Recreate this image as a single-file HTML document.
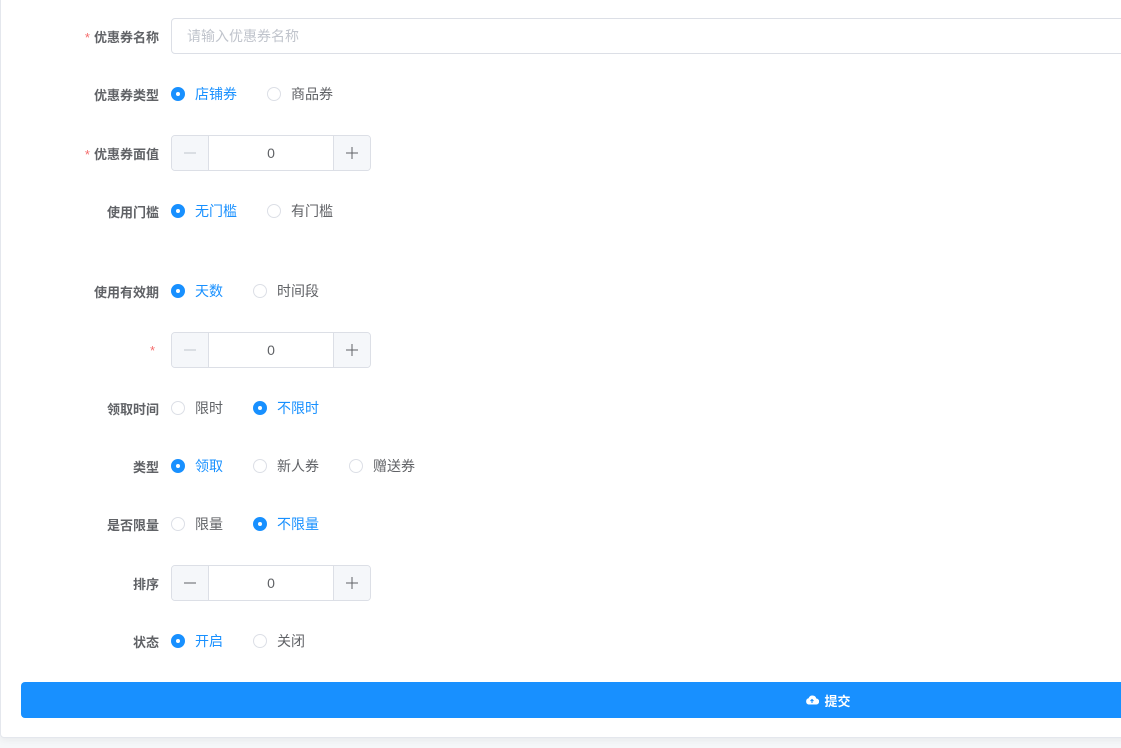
<!DOCTYPE html>
<html><head><meta charset="utf-8"><style>
*{box-sizing:border-box;margin:0;padding:0}
body{width:1121px;height:748px;background:#f5f7f9;font-family:"Liberation Sans","Noto Sans CJK SC",sans-serif;font-size:14px;color:#606266;overflow:hidden;position:relative}
.card{position:absolute;left:0;top:-10px;width:1140px;height:748px;background:#fff;border:1px solid #e4e7ed;border-radius:4px;box-shadow:0 2px 8px rgba(0,0,0,.06)}
.row{position:absolute;left:0;height:36px;display:flex;align-items:center}
.lab{width:159px;text-align:right;font-weight:bold;color:#606266;font-size:13px;margin-right:12px}
.req{color:#f56c6c;font-weight:normal;margin-right:4px}
.inp{width:960px;height:36px;border:1px solid #dcdfe6;border-radius:4px;padding-left:15px;line-height:34px;color:#c0c4cc;font-size:14px}
.r{display:flex;align-items:center;margin-right:30px}
.c{width:14px;height:14px;border:1px solid #dcdfe6;border-radius:50%;margin-right:10px;background:#fff;position:relative}
.on .c{background:#1890ff;border-color:#1890ff}
.on .c:after{content:"";position:absolute;left:4px;top:4px;width:4px;height:4px;border-radius:50%;background:#fff}
.on{color:#1890ff}
.num{width:200px;height:36px;border:1px solid #dcdfe6;border-radius:4px;display:flex;overflow:hidden}
.num .b{width:36px;background:#f5f7fa;display:flex;align-items:center;justify-content:center}
.num .m{flex:1;border-left:1px solid #dcdfe6;border-right:1px solid #dcdfe6;text-align:center;line-height:34px;font-size:14px}
.btn{position:absolute;left:21px;top:682px;width:1614px;height:36px;background:#1890ff;border-radius:4px;color:#fff;font-weight:bold;font-size:13px;display:flex;align-items:center;justify-content:center}
</style></head><body>
<div class="card"></div>
<div class="row" style="top:18px"><div class="lab"><span class="req">*</span>优惠券名称</div><div class="inp">请输入优惠券名称</div></div>
<div class="row" style="top:76px"><div class="lab">优惠券类型</div><div class="r on"><span class="c"></span>店铺券</div><div class="r"><span class="c"></span>商品券</div></div>
<div class="row" style="top:135px"><div class="lab"><span class="req">*</span>优惠券面值</div><div class="num"><div class="b"><svg width="14" height="14"><path d="M1 7h12" stroke="#c0c4cc" stroke-width="1"/></svg></div><div class="m">0</div><div class="b"><svg width="14" height="14"><path d="M1 7h12M7 1v12" stroke="#606266" stroke-width="1"/></svg></div></div></div>
<div class="row" style="top:193px"><div class="lab">使用门槛</div><div class="r on"><span class="c"></span>无门槛</div><div class="r"><span class="c"></span>有门槛</div></div>
<div class="row" style="top:273px"><div class="lab">使用有效期</div><div class="r on"><span class="c"></span>天数</div><div class="r"><span class="c"></span>时间段</div></div>
<div class="row" style="top:332px"><div class="lab"><span class="req">*</span></div><div class="num"><div class="b"><svg width="14" height="14"><path d="M1 7h12" stroke="#c0c4cc" stroke-width="1"/></svg></div><div class="m">0</div><div class="b"><svg width="14" height="14"><path d="M1 7h12M7 1v12" stroke="#606266" stroke-width="1"/></svg></div></div></div>
<div class="row" style="top:390px"><div class="lab">领取时间</div><div class="r"><span class="c"></span>限时</div><div class="r on"><span class="c"></span>不限时</div></div>
<div class="row" style="top:448px"><div class="lab">类型</div><div class="r on"><span class="c"></span>领取</div><div class="r"><span class="c"></span>新人券</div><div class="r"><span class="c"></span>赠送券</div></div>
<div class="row" style="top:506px"><div class="lab">是否限量</div><div class="r"><span class="c"></span>限量</div><div class="r on"><span class="c"></span>不限量</div></div>
<div class="row" style="top:565px"><div class="lab">排序</div><div class="num"><div class="b"><svg width="14" height="14"><path d="M1 7h12" stroke="#606266" stroke-width="1"/></svg></div><div class="m">0</div><div class="b"><svg width="14" height="14"><path d="M1 7h12M7 1v12" stroke="#606266" stroke-width="1"/></svg></div></div></div>
<div class="row" style="top:623px"><div class="lab">状态</div><div class="r on"><span class="c"></span>开启</div><div class="r"><span class="c"></span>关闭</div></div>
<div class="btn"><svg width="14" height="12" viewBox="0 0 14 12" style="margin-right:5px"><path d="M3.5 10.5h7.5a3 3 0 0 0 .3-6A4 4 0 0 0 3.6 4.3 3.2 3.2 0 0 0 3.5 10.5z" fill="#fff"/><path d="M7 9V5.5M5.5 7L7 5.5 8.5 7" stroke="#1890ff" stroke-width="1.1" fill="none"/></svg>提交</div>
</body></html>
